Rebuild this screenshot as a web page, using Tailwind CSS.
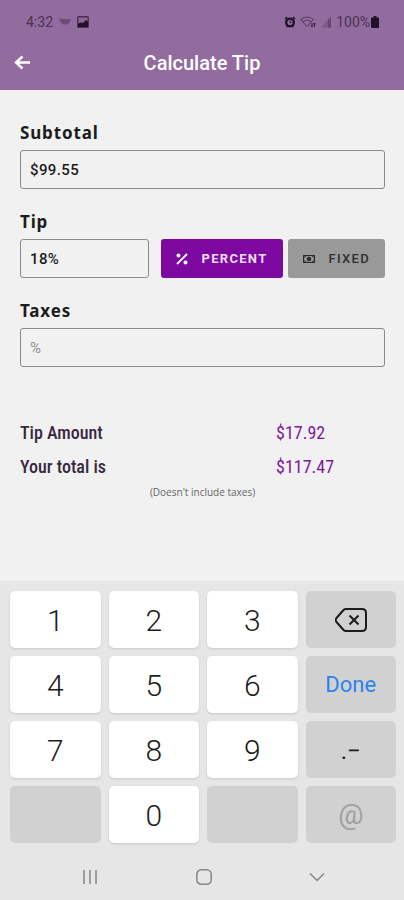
<!DOCTYPE html>
<html lang="en">
  <head>
    <meta charset="UTF-8" />
    <meta name="viewport" content="width=device-width, initial-scale=1.0" />
    <title>Calculate Tip</title>
    <script src="https://cdn.jsdelivr.net/npm/@tailwindcss/browser@4"></script>
  </head>
  <body class="flex min-h-screen flex-col bg-[#f1f1f1] font-['Roboto',sans-serif] text-[#1c1c1c]">
    <!-- Header -->
    <header class="bg-[#926b9f] pb-[7px]">
      <div class="flex h-[43px] items-center justify-between pr-6 pl-[26px] text-sm text-[#4a3352]">
        <div class="flex items-center gap-1.5">
          <span>4:32</span>
          <svg class="h-2 w-3" viewBox="0 0 12 8" fill="#6b4c77" aria-hidden="true">
            <path d="M1 1h10q1 0 .6 1L10 5 8 6.500H4L2 5 .4 2Q0 1 1 1z" />
          </svg>
          <svg class="size-3" viewBox="0 0 12 12" aria-hidden="true">
            <rect x="0.7" y="0.7" width="10.6" height="10.6" rx="1" fill="#8a6596" stroke="#4a3152" stroke-width="1.4" />
            <path d="M1 11V7.500l3-1 2 .5 3-3 2 1.500V11z" fill="#21112a" />
          </svg>
        </div>
        <div class="flex items-center gap-1">
          <svg class="size-3" viewBox="0 0 12 12" fill="none" stroke="#21112a" aria-hidden="true">
            <circle cx="6" cy="6.4" r="3.8" stroke-width="2.4" />
            <path d="M1 3l2-2M11 3L9 1M2.5 11l1.5-1.5M9.5 11L8 9.5" stroke-width="1.5" />
            <path d="M6 4.5v2h1.5" />
          </svg>
          <svg class="h-3 w-4" viewBox="0 0 16 12" fill="none" stroke="#553a5f" aria-hidden="true">
            <path d="M.7 3.5Q7 -1.5 13.3 3.5L7 10.5z" />
            <path d="M3 5.5Q7 2.500 11 5.500" />
            <path d="M12 7v4M10.5 9.5L12 11l1-1.5M14.5 11V7M13.3 8.5l1.2-1.5L16 8.5" stroke="#35203c" />
          </svg>
          <svg class="h-3 w-3" viewBox="0 0 12 12" aria-hidden="true">
            <path d="M.7 11.5H11V.8z" fill="#7c5888" />
            <path d="M8 4v7.500h3V.8z" fill="#664571" />
          </svg>
          <span class="flex items-center">
            <span>100%</span>
            <svg class="h-3 w-[10px]" viewBox="0 0 10 12" fill="#21112a" aria-hidden="true">
              <path d="M3.5 0h3v1.5H8q1 0 1 1V11q0 1-1 1H2q-1 0-1-1V2.500q0-1 1-1h1.5z" />
            </svg>
          </span>
        </div>
      </div>
      <div class="grid h-10 grid-cols-[48px_1fr_48px] items-center">
        <button type="button" aria-label="Back" class="flex h-10 items-center pl-3.5">
          <svg class="size-4" viewBox="0 0 16 16" fill="none" stroke="#fff" stroke-width="2.4">
            <path d="M16 7.5H2.500M8.500 1.500L2 7.5L8.500 13.500" />
          </svg>
        </button>
        <h1 class="text-center text-xl font-medium text-white">Calculate Tip</h1>
      </div>
    </header>

    <!-- Tip form -->
    <main class="flex-1 pt-[31px] pr-[19px] pb-8 pl-5">
      <form class="space-y-[21px] font-['Noto_Sans',sans-serif]">
        <div>
          <label for="subtotal" class="mb-[5px] block text-[17px] leading-6 font-bold tracking-wider">Subtotal</label>
          <input
            type="text"
            id="subtotal"
            value="$99.55"
            class="h-[39px] w-full rounded-[3px] border border-[#8b8b8b] px-[9px] font-['Roboto',sans-serif] text-[15px] font-medium tracking-wide"
          />
        </div>

        <div>
          <label for="tip" class="mb-[5px] block text-[17px] leading-6 font-bold tracking-wider">Tip</label>
          <div class="flex gap-[5px] font-['Roboto',sans-serif]">
            <input
              type="text"
              id="tip"
              value="18%"
              class="mr-[7px] h-[39px] w-0 min-w-0 flex-1 rounded-[3px] border border-[#8b8b8b] px-[9px] text-[15px] font-medium tracking-wide"
            />
            <button
              type="button"
              class="flex h-[39px] items-center gap-3.5 rounded-[3px] bg-[#7d08a0] px-[15px] text-[13px] font-bold tracking-widest text-[#f0dcf5]"
            >
              <svg class="size-3" viewBox="0 0 12 12" aria-hidden="true">
                <path d="M1 11L11 1" stroke="#fff" stroke-width="1.8" />
                <circle cx="2.5" cy="2.5" r="2" fill="#fff" />
                <circle cx="9.5" cy="9.5" r="2" fill="#fff" />
              </svg>
              PERCENT
            </button>
            <button
              type="button"
              class="flex h-[39px] items-center gap-3.5 rounded-[3px] bg-[#999] px-[15px] text-[13px] font-medium tracking-widest text-[#303030]"
            >
              <svg class="h-2 w-3" viewBox="0 0 12 8" fill="none" stroke="#2a2a2a" aria-hidden="true">
                <rect x="0.5" y="0.5" width="11" height="7" stroke-width="1.2" />
                <circle cx="6" cy="4" r="1.8" fill="#2a2a2a" />
                <path d="M1 2.5L3 1M9 1l2 1.5M1 5.5L3 7M9 7l2-1.5" />
              </svg>
              FIXED
            </button>
          </div>
        </div>

        <div>
          <label for="taxes" class="mb-[5px] block text-[17px] leading-6 font-bold tracking-wider">Taxes</label>
          <input
            type="text"
            id="taxes"
            placeholder="%"
            class="h-[39px] w-full rounded-[3px] border border-[#8b8b8b] px-[9px] font-['Roboto',sans-serif] text-[15px] placeholder:text-[#8f8f8f]"
          />
        </div>
      </form>

      <!-- Results -->
      <dl class="mt-[49px] grid grid-cols-[256px_1fr] font-['Roboto_Condensed','Liberation_Sans_Narrow','Roboto',sans-serif] text-lg leading-[34px]">
        <dt class="font-medium text-[#39273f]">Tip Amount</dt>
        <dd class="text-[#7d189d]">$17.92</dd>
        <dt class="font-medium text-[#39273f]">Your total is</dt>
        <dd class="text-[#7d189d]">$117.47</dd>
      </dl>
      <p class="text-center font-['Open_Sans',sans-serif] text-[10px] leading-4 text-[#666]">(Doesn't include taxes)</p>
    </main>

    <!-- Keypad -->
    <footer class="bg-[#e6e6e6] pt-[10px]">
      <div class="grid auto-rows-[57px] grid-cols-4 gap-2 pr-2 pl-[10px] text-3xl font-light">
        <button type="button" class="rounded-[5px] bg-white pt-0.5 shadow-sm">1</button>
        <button type="button" class="rounded-[5px] bg-white pt-0.5 shadow-sm">2</button>
        <button type="button" class="rounded-[5px] bg-white pt-0.5 shadow-sm">3</button>
        <button type="button" aria-label="Delete" class="flex items-center justify-center rounded-[5px] bg-[#d1d1d1]">
          <svg class="h-6 w-8" viewBox="0 0 32 24" fill="none" stroke="#1c1c1c" stroke-width="2">
            <path d="M11 1H27Q31 1 31 5V19Q31 23 27 23H11Q9.5 23 8.5 22L1.5 14Q0 12 1.5 10L8.5 2Q9.5 1 11 1z" />
            <path d="M14.5 7.5l9 9M23.5 7.5l-9 9" />
          </svg>
        </button>
        <button type="button" class="rounded-[5px] bg-white pt-0.5 shadow-sm">4</button>
        <button type="button" class="rounded-[5px] bg-white pt-0.5 shadow-sm">5</button>
        <button type="button" class="rounded-[5px] bg-white pt-0.5 shadow-sm">6</button>
        <button type="button" class="rounded-[5px] bg-[#d1d1d1] pt-0.5 text-[22px] font-normal text-[#2d83ee]">Done</button>
        <button type="button" class="rounded-[5px] bg-white pt-0.5 shadow-sm">7</button>
        <button type="button" class="rounded-[5px] bg-white pt-0.5 shadow-sm">8</button>
        <button type="button" class="rounded-[5px] bg-white pt-0.5 shadow-sm">9</button>
        <button type="button" class="rounded-[5px] bg-[#d1d1d1] pt-0.5 text-2xl font-normal">.−</button>
        <button type="button" disabled aria-label="Blank" class="rounded-[5px] bg-[#d1d1d1]"></button>
        <button type="button" class="rounded-[5px] bg-white pt-0.5 shadow-sm">0</button>
        <button type="button" disabled aria-label="Blank" class="rounded-[5px] bg-[#d1d1d1]"></button>
        <button type="button" class="rounded-[5px] bg-[#d1d1d1] text-[28px] font-normal text-[#a0a0a0]">@</button>
      </div>
      <nav class="flex justify-between pt-[26px] pr-[79px] pb-[15px] pl-[82px]">
        <button type="button" aria-label="Recent apps">
          <svg class="size-4" viewBox="0 0 16 16" fill="none" stroke="#858585" stroke-width="1.5">
            <path d="M2 1v14M8 1v14M14 1v14" />
          </svg>
        </button>
        <button type="button" aria-label="Home">
          <svg class="size-4" viewBox="0 0 16 16" fill="none" stroke="#858585" stroke-width="1.5">
            <rect x="0.8" y="0.8" width="14.4" height="14.4" rx="4.5" />
          </svg>
        </button>
        <button type="button" aria-label="Hide keyboard">
          <svg class="size-4" viewBox="0 0 16 16" fill="none" stroke="#858585" stroke-width="1.5">
            <path d="M1 4.5L8 11.5L15 4.5" />
          </svg>
        </button>
      </nav>
    </footer>
  </body>
</html>
